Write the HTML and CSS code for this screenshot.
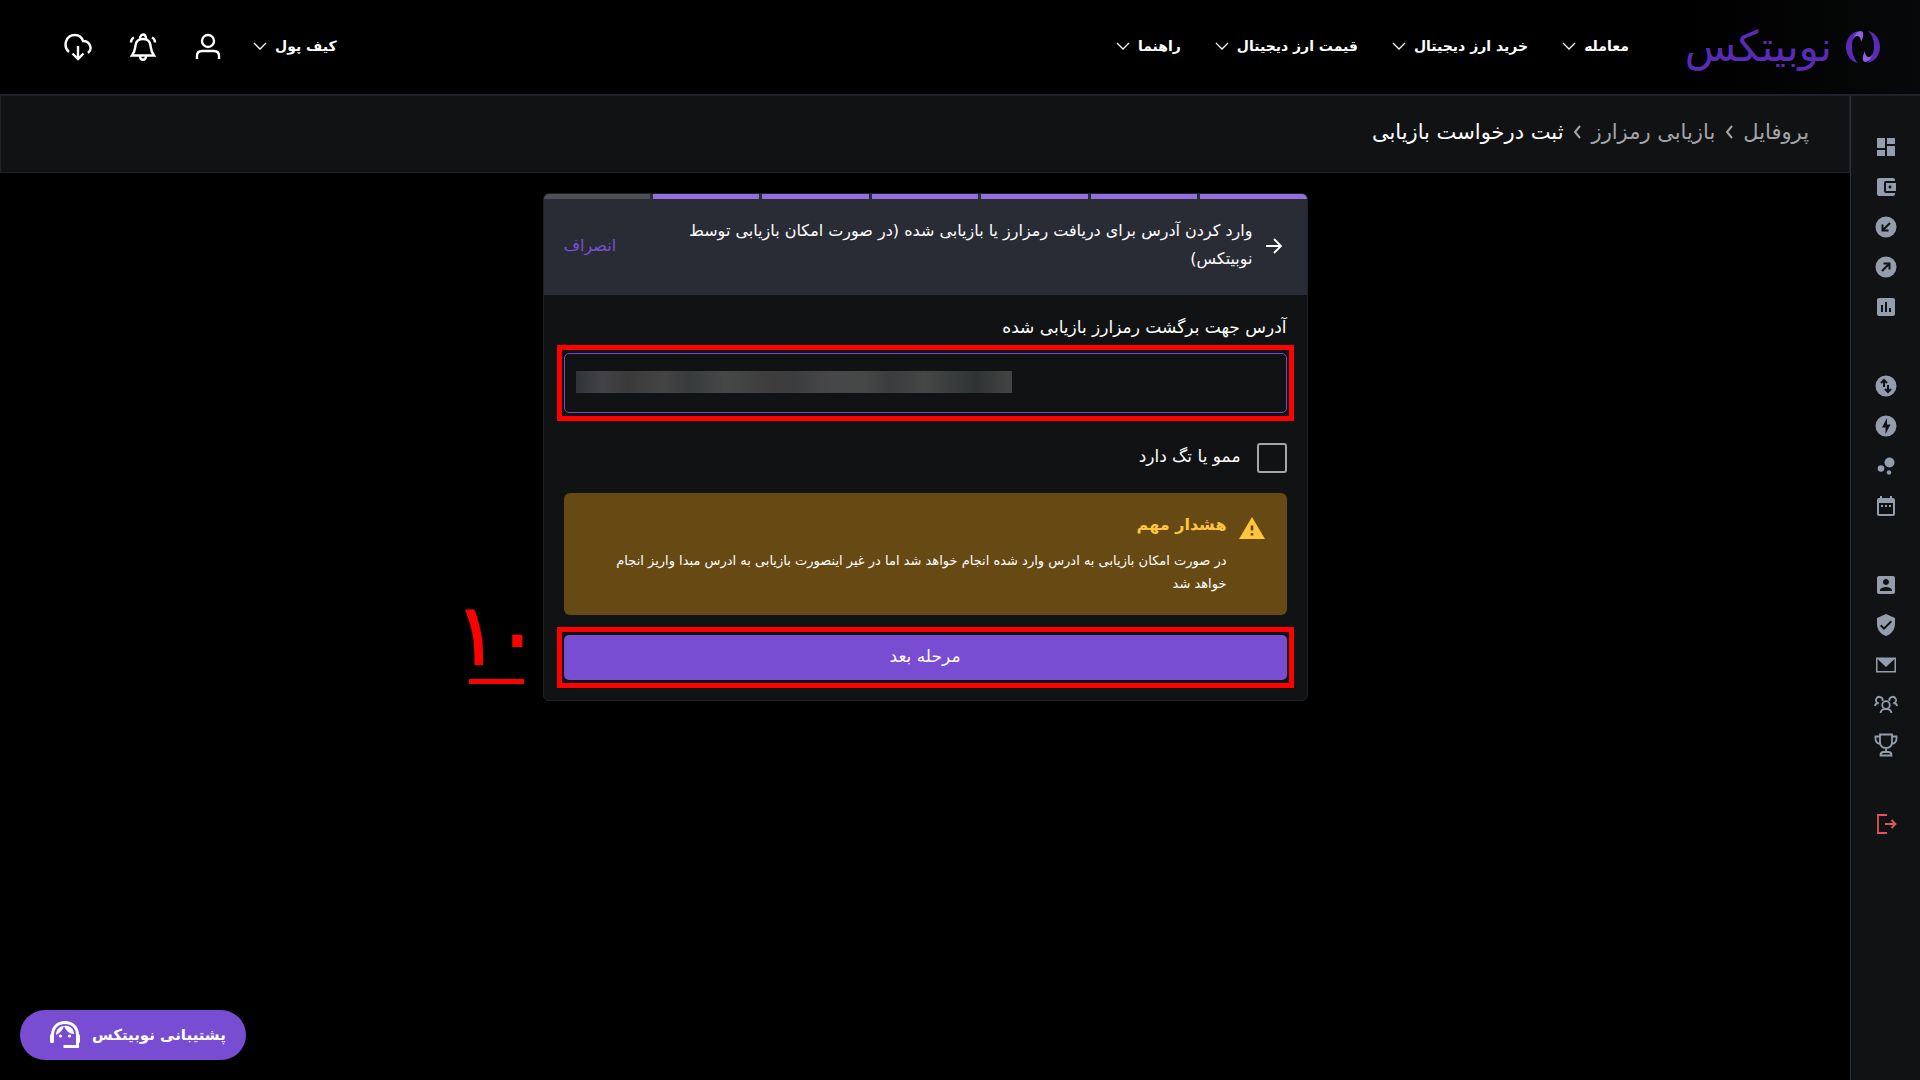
FILE: index.html
```html
<!DOCTYPE html>
<html lang="fa" dir="rtl">

<head>
  <meta charset="UTF-8">
  <meta name="viewport" content="width=device-width, initial-scale=1.0">
  <title>ثبت درخواست بازیابی | نوبیتکس</title>
  <link rel="stylesheet" href="styles.css">
</head>

<body>
  <svg class="defs" aria-hidden="true">
    <symbol id="chevron" viewBox="0 0 14 8">
      <path d="M1 1l6 6 6-6" fill="none" stroke="currentColor" stroke-width="1.3" />
    </symbol>
    <symbol id="sep" viewBox="0 0 8 14">
      <path d="M7 1L2 7l5 6" fill="none" stroke="currentColor" stroke-width="2" />
    </symbol>
  </svg>

  <header class="topbar">
    <a class="logo" href="#" aria-label="نوبیتکس">
      <svg width="34" height="32" viewBox="0 0 34 32">
        <path d="M13 0C5 1 0 8 0 16s5 15 12 16C8 28 6 22 6 15 6 8 9 3 13 0z" fill="#5a2bb8" />
        <path d="M22 0c7 1 12 8 12 16s-5 15-13 16c4-4 7-9 7-17 0-6-2-12-6-15z" fill="#5a2bb8" />
        <path d="M7 9c1-5 4-9 8-9 3 1 3 5 0 11 0-4-2-6-4-6-2 0-3 2-4 4z" fill="#8c5fe0" />
        <path d="M27 22c-1 5-4 9-8 9-3-1-3-5 0-11 0 4 2 6 4 6 2 0 3-2 4-4z" fill="#8c5fe0" />
      </svg>
      <span class="logo-text">نوبیتکس</span>
    </a>

    <nav class="menu">
      <a href="#">معامله <svg width="14" height="8"><use href="#chevron" /></svg></a>
      <a href="#">خرید ارز دیجیتال <svg width="14" height="8"><use href="#chevron" /></svg></a>
      <a href="#">قیمت ارز دیجیتال <svg width="14" height="8"><use href="#chevron" /></svg></a>
      <a href="#">راهنما <svg width="14" height="8"><use href="#chevron" /></svg></a>
    </nav>

    <div class="tools">
      <a class="wallet" href="#">کیف پول <svg width="14" height="8"><use href="#chevron" /></svg></a>
      <button type="button" aria-label="حساب کاربری">
        <svg width="28" height="28" viewBox="0 0 28 28">
          <circle cx="14" cy="8" r="6" />
          <path d="M3 26v-3c0-3 2-5 5-5h12c3 0 5 2 5 5v3" />
        </svg>
      </button>
      <button type="button" aria-label="اعلان‌ها">
        <svg width="28" height="28" viewBox="0 0 28 28">
          <path d="M3 22.500c3-4 3-6 3.500-10C7 8 10 6 14 6s7 2 7.500 6.500c.5 4 .5 6 3.500 10z" />
          <path d="M11 6c0-6 6-6 6 0M11 23c0 5 6 5 6 0M2 9.500c0-3 1-4 3-5M26 9.500c0-3-1-4-3-5" />
        </svg>
      </button>
      <button type="button" aria-label="دریافت">
        <svg width="28" height="28" viewBox="0 0 28 28">
          <path d="M5 19C-1 14 1 2 11 2c5 0 7 3 8 6 7 0 10 8 5 12" />
          <path d="M14 13v13M8.500 20.500L14 26l5.500-5.500" />
        </svg>
      </button>
    </div>
  </header>

  <div class="layout">
    <aside class="sidebar">
      <ul>
        <li><a href="#" aria-label="داشبورد"><svg viewBox="0 0 24 24"><path d="M3 13h8V3H3v10zm0 8h8v-6H3v6zm10 0h8V11h-8v10zm0-18v6h8V3h-8z" /></svg></a></li>
        <li><a href="#" aria-label="کیف پول"><svg viewBox="0 0 24 24"><path d="M21 18v1c0 1.100-.9 2-2 2H5c-1.110 0-2-.9-2-2V5c0-1.100.89-2 2-2h14c1.100 0 2 .9 2 2v1h-9c-1.110 0-2 .9-2 2v8c0 1.100.89 2 2 2h9zm-9-2h10V8H12v8zm4-2.500c-.83 0-1.500-.67-1.500-1.500s.67-1.500 1.500-1.500 1.500.67 1.500 1.500-.67 1.500-1.500 1.500z" /></svg></a></li>
        <li><a href="#" aria-label="واریز"><svg viewBox="0 0 24 24"><circle cx="12" cy="12" r="10.500" /><path class="cut" d="M16 8l-7 7M8.500 9.500v6h6" /></svg></a></li>
        <li><a href="#" aria-label="برداشت"><svg viewBox="0 0 24 24"><circle cx="12" cy="12" r="10.500" /><path class="cut" d="M8 16l7-7M9.500 8.500h6v6" /></svg></a></li>
        <li><a href="#" aria-label="گزارش"><svg viewBox="0 0 24 24"><path d="M19 3H5c-1.100 0-2 .9-2 2v14c0 1.100.9 2 2 2h14c1.100 0 2-.9 2-2V5c0-1.100-.9-2-2-2zM9 17H7v-7h2v7zm4 0h-2V7h2v10zm4 0h-2v-4h2v4z" /></svg></a></li>
      </ul>
      <ul>
        <li><a href="#" aria-label="تبدیل"><svg viewBox="0 0 24 24"><circle cx="12" cy="12" r="10.500" /><path class="cut" d="M10 13V6M7 9l3-3 3 3M14 11v7M11 15l3 3 3-3" /></svg></a></li>
        <li><a href="#" aria-label="معامله سریع"><svg viewBox="0 0 24 24"><path d="M12 1.500a10.500 10.500 0 100 21 10.500 10.500 0 000-21zM11.500 20v-6.500H8L13 4v6.500h3.500z" /></svg></a></li>
        <li><a href="#" aria-label="استیکینگ"><svg viewBox="0 0 24 24"><circle cx="7" cy="14.500" r="3.300" /><circle cx="15.500" cy="8.500" r="5" /><circle cx="15" cy="18.500" r="2.200" /></svg></a></li>
        <li><a href="#" aria-label="تقویم"><svg viewBox="0 0 24 24"><path d="M19 4h-1V2h-2v2H8V2H6v2H5a2 2 0 00-2 2v14a2 2 0 002 2h14a2 2 0 002-2V6a2 2 0 00-2-2zm0 16H5V9h14zM7 11h2v2H7zm4 0h2v2h-2zm4 0h2v2h-2z" /></svg></a></li>
      </ul>
      <ul>
        <li><a href="#" aria-label="پروفایل"><svg viewBox="0 0 24 24"><path d="M3 5v14c0 1.100.89 2 2 2h14c1.100 0 2-.9 2-2V5c0-1.100-.9-2-2-2H5c-1.110 0-2 .9-2 2zm12 4c0 1.660-1.340 3-3 3s-3-1.340-3-3 1.340-3 3-3 3 1.340 3 3zm-9 8c0-2 4-3.100 6-3.100s6 1.100 6 3.100v1H6v-1z" /></svg></a></li>
        <li><a href="#" aria-label="امنیت"><svg viewBox="0 0 24 24"><path d="M12 1L3 5v6c0 5.550 3.840 10.740 9 12 5.160-1.260 9-6.450 9-12V5l-9-4zm-2 16l-4-4 1.410-1.410L10 14.170l6.590-6.590L18 9l-8 8z" /></svg></a></li>
        <li><a href="#" aria-label="پیام‌ها"><svg viewBox="0 0 24 24"><path d="M2 4.500h20v15H2zM3.500 6v12h17V6L12 14z" fill-rule="evenodd" /></svg></a></li>
        <li><a href="#" aria-label="معرفی دوستان"><svg class="line" viewBox="0 0 24 24"><circle cx="12" cy="12" r="3.800" /><path d="M6.500 20c.5-3 2.500-4.200 5.500-4.200s5 1.200 5.500 4.200M8.500 8a3.300 3.300 0 10-4.500 2.200M.8 13c.5-2 1.700-2.800 4-2.800M15.500 8a3.300 3.300 0 114.500 2.200M23.200 13c-.5-2-1.700-2.800-4-2.800" /></svg></a></li>
        <li><a href="#" aria-label="جوایز"><svg class="line" viewBox="0 0 24 24"><path d="M6 1.500h12V9c0 4-2.500 6-6 6s-6-2-6-6zM6 3.500H1.500C1 8 3 10.500 6.500 11M18 3.500h4.500C23 8 21 10.500 17.500 11M12 15v4M6.500 22.500c0-2 1-3.500 3-3.500h5c2 0 3 1.500 3 3.500z" /></svg></a></li>
      </ul>
      <ul>
        <li><a href="#" class="logout" aria-label="خروج"><svg class="line" viewBox="0 0 24 24"><path d="M13 3H4v18h9M11 12h10.500M17.500 8l4 4-4 4" /></svg></a></li>
      </ul>
    </aside>

    <main>
      <nav class="breadcrumb">
        <a href="#">پروفایل</a>
        <svg width="8" height="14"><use href="#sep" /></svg>
        <a href="#">بازیابی رمزارز</a>
        <svg width="8" height="14"><use href="#sep" /></svg>
        <span class="current">ثبت درخواست بازیابی</span>
      </nav>

      <div class="card">
        <div class="card-head">
          <div class="steps">
            <i></i><i></i><i></i><i></i><i></i><i></i><i class="off"></i>
          </div>
          <div class="title-row">
            <button type="button" class="back" aria-label="بازگشت">
              <svg width="18" height="18" viewBox="0 0 18 18"><path d="M1 10h15M9 3l7 7-7 7" fill="none" stroke="currentColor" stroke-width="1.800" /></svg>
            </button>
            <h1>وارد کردن آدرس برای دریافت رمزارز یا بازیابی شده (در صورت امکان بازیابی توسط نوبیتکس)</h1>
            <a class="cancel" href="#">انصراف</a>
          </div>
        </div>

        <form class="card-body">
          <label class="field-label" for="address">آدرس جهت برگشت رمزارز بازیابی شده</label>
          <div class="marked">
            <input id="address" class="address" type="text" dir="ltr">
          </div>

          <div class="check">
            <input id="memo" type="checkbox">
            <label for="memo">ممو یا تگ دارد</label>
          </div>

          <div class="alert">
            <svg width="26" height="22" viewBox="0 0 26 22"><path d="M13 0L0 22h26zM11.700 8.500h2.600v5h-2.600zM11.700 16h2.600v2.600h-2.600z" fill="#ffc53d" fill-rule="evenodd" /></svg>
            <div>
              <h2>هشدار مهم</h2>
              <p>در صورت امکان بازیابی به ادرس وارد شده انجام خواهد شد اما در غیر اینصورت بازیابی به ادرس مبدا واریز انجام خواهد شد</p>
            </div>
          </div>

          <div class="marked">
            <button type="button" class="next">مرحله بعد</button>
          </div>
        </form>

        <span class="step-number">۱۰</span>
      </div>
    </main>
  </div>

  <button type="button" class="support">
    پشتیبانی نوبیتکس
    <svg width="30" height="28" viewBox="0 0 30 28">
      <path d="M2.500 14C2.500 6 8 1.500 15 1.500S27.500 6 27.500 14v11.500H13.500" fill="none" stroke="#fff" stroke-width="3" />
      <rect x="0" y="13" width="4" height="9" rx="1.500" fill="#fff" />
      <rect x="26" y="13" width="4" height="9" rx="1.500" fill="#fff" />
      <path d="M6 14c0-6 4-9 8-9-1 4-4 7-8 9zM14 5c6-1 10 3 10 8-4 0-8-3-10-8z" fill="#fff" />
      <circle cx="10.500" cy="15" r="1.600" fill="#fff" />
      <circle cx="19.500" cy="15" r="1.600" fill="#fff" />
    </svg>
  </button>
</body>

</html>
```
FILE: styles.css
```css
* {
  box-sizing: border-box;
}

body {
  margin: 0;
  min-height: 100vh;
  display: flex;
  flex-direction: column;
  background-color: #000;
  color: #fff;
  font-family: "DejaVu Sans", sans-serif;
  font-size: 16px;
}

a {
  color: inherit;
  text-decoration: none;
}

button {
  padding: 0;
  border: 0;
  background: none;
  color: inherit;
  font-family: inherit;
  cursor: pointer;
}

ul {
  list-style: none;
  margin: 0;
  padding: 0;
}

svg {
  display: block;
  flex: none;
}

.defs {
  position: absolute;
  width: 0;
  height: 0;
}

/* top bar */
.topbar {
  display: flex;
  align-items: center;
  height: 96px;
  padding: 0 40px 0 64px;
  border-bottom: 2px solid #1f2329;
  background: linear-gradient(to right, #000 88%, #070809);
}

.logo {
  display: flex;
  align-items: center;
  gap: 14px;
  color: #5a2bb8;
}

.logo-text {
  font-size: 42px;
  line-height: 40px;
}

.menu {
  display: flex;
  gap: 34px;
  margin-right: 56px;
}

.menu a,
.wallet {
  display: flex;
  align-items: center;
  gap: 8px;
  padding-bottom: 2px;
  font-size: 14px;
  font-weight: bold;
  line-height: 24px;
}

.tools {
  display: flex;
  align-items: center;
  gap: 37px;
  margin-right: auto;
}

.wallet {
  margin-left: -6px;
}

.tools button svg {
  fill: none;
  stroke: #fff;
  stroke-width: 2.4;
}

/* side menu */
.layout {
  display: flex;
  flex: 1;
}

.sidebar {
  width: 70px;
  padding: 39px 0;
  border-left: 1px solid #2a303c;
  background-color: #111214;
}

.sidebar ul {
  display: flex;
  flex-direction: column;
  align-items: center;
  gap: 16px;
  margin-bottom: 55px;
}

.sidebar svg {
  width: 24px;
  height: 24px;
  fill: #939dab;
}

.sidebar .cut {
  fill: none;
  stroke: #111214;
  stroke-width: 2;
}

.sidebar .line {
  fill: none;
  stroke: #939dab;
  stroke-width: 1.8;
}

.sidebar .logout .line {
  stroke: #e0525c;
}

main {
  flex: 1;
}

.breadcrumb {
  display: flex;
  align-items: center;
  gap: 10px;
  height: 77px;
  padding: 0 40px 4px;
  border: 1px solid #1f2329;
  border-top: 0;
  background-color: #111214;
  color: #a3a5a9;
  font-size: 21px;
}

.current {
  color: #fff;
}

/* recovery form */
.card {
  position: relative;
  width: 765px;
  max-width: 100%;
  margin: 20px auto;
  border: 1px solid #1f2126;
  border-radius: 6px;
  background-color: #111214;
}

.card-head {
  border-radius: 5px 5px 0 0;
  background-color: #2a2c35;
  overflow: hidden;
}

.steps {
  display: flex;
  gap: 3px;
}

.steps i {
  flex: 1;
  height: 5px;
  background-color: #946fdb;
}

.steps .off {
  background-color: #4c4e58;
}

.title-row {
  display: flex;
  align-items: center;
  padding: 18px 20px 22px;
}

.back {
  margin: 0 4px 0 12px;
}

h1 {
  flex: 1;
  margin: 0 0 0 56px;
  font-size: 16px;
  font-weight: normal;
  line-height: 28px;
}

.cancel {
  color: #7b4fd4;
}

.card-body {
  padding: 16px 20px 20px;
}

.field-label {
  display: block;
  margin-bottom: 10px;
  font-size: 17px;
  line-height: 32px;
}

/* red frame around the fields to fill in */
.marked {
  position: relative;
}

.marked::after {
  content: "";
  position: absolute;
  inset: -8px -7px;
  border: 5px solid #f00;
  pointer-events: none;
}

.address {
  display: block;
  width: 100%;
  height: 60px;
  padding: 0 12px;
  border: 1px solid #7549cc;
  border-radius: 5px;
  background: #111214 linear-gradient(to right, #303436, #434246 6%, #3a3a3a 12%, #444 20%, #383b3c 26%, #464848 34%, #3f3d3d 44%, #3c3d3f 50%, #47474a 58%, #454846 66%, #3a3c3e 72%, #444745 80%, #303334 92%, #444) no-repeat 11px 17px / 436px 22px;
  color: #fff;
  font-size: 16px;
  outline: none;
}

.check {
  display: flex;
  align-items: center;
  gap: 16px;
  margin: 30px 0 20px;
}

.check input {
  appearance: none;
  width: 30px;
  height: 30px;
  margin: 0;
  border: 2px solid #a3a5a9;
  border-radius: 3px;
}

.check label {
  padding-bottom: 4px;
  font-size: 17px;
}

.alert {
  display: flex;
  gap: 12px;
  margin-bottom: 20px;
  padding: 16px 22px 20px 20px;
  border-radius: 6px;
  background-color: #674914;
}

.alert svg {
  margin-top: 8px;
}

h2 {
  margin: 0;
  color: #ffc53d;
  font-size: 16px;
  font-weight: bold;
  line-height: 32px;
}

.alert p {
  margin: 8px 0 0;
  font-size: 13px;
  line-height: 23px;
}

.next {
  display: block;
  width: 100%;
  height: 45px;
  padding-bottom: 4px;
  border-radius: 5px;
  background-color: #784dd2;
  color: #fff;
  font-size: 17px;
}

.step-number {
  position: absolute;
  right: 100%;
  top: 397px;
  margin-right: 6px;
  color: #f00;
  font-family: "DejaVu Sans Condensed", "DejaVu Sans", sans-serif;
  font-size: 84px;
  line-height: 88px;
  -webkit-text-stroke: 2px #f00;
}

.step-number::after {
  content: "";
  display: block;
  width: 55px;
  height: 5px;
  margin: 0 auto;
  background-color: #f00;
}

.support {
  position: fixed;
  left: 20px;
  bottom: 20px;
  display: flex;
  align-items: center;
  gap: 12px;
  height: 50px;
  padding: 0 20px 0 30px;
  border-radius: 25px;
  background-color: #784dd2;
  font-size: 15px;
  font-weight: bold;
}
```
